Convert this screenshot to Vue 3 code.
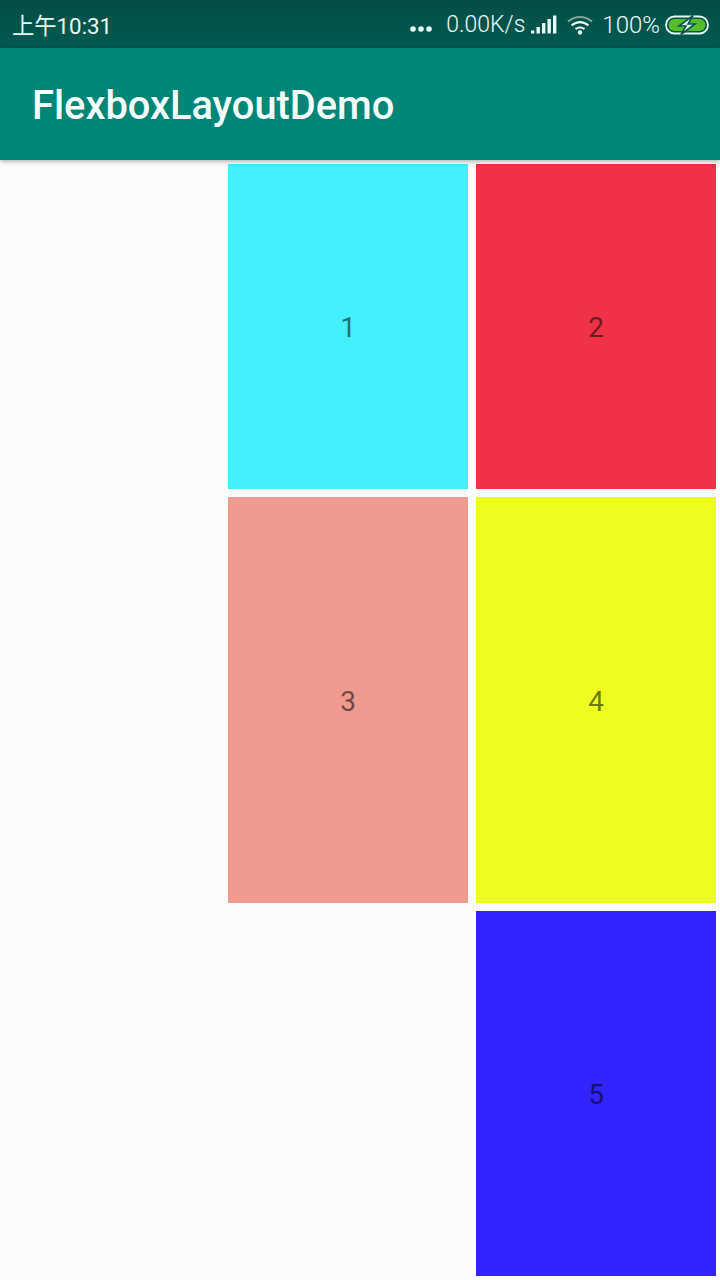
<script setup>
const items = [
  { label: '1', color: '#43eeff', height: 325 },
  { label: '2', color: '#ef3245', height: 325 },
  { label: '3', color: '#ef9a8f', height: 406 },
  { label: '4', color: '#eeff1f', height: 406 },
  { label: '5', color: '#3222ff', height: 365 },
]
</script>

<template>
  <div class="page">
    <div class="status-bar">
      <span class="time">上午10:31</span>
      <div class="status-right">
        <svg class="dots" width="22" height="6" viewBox="0 0 22 6">
          <circle cx="3" cy="3" r="2.8" />
          <circle cx="11" cy="3" r="2.8" />
          <circle cx="19" cy="3" r="2.8" />
        </svg>
        <span class="speed">0.00K/s</span>
        <svg class="signal" width="26" height="20" viewBox="0 0 26 20">
          <rect x="0" y="15.5" width="3.4" height="3" />
          <rect x="5.5" y="12" width="3.4" height="6.5" />
          <rect x="11" y="8" width="3.4" height="10.5" />
          <rect x="16.5" y="4" width="3.4" height="14.5" />
          <rect x="22" y="0.5" width="3.4" height="18" />
        </svg>
        <svg class="wifi" width="26" height="20" viewBox="0 0 26 20" fill="none">
          <path d="M1 6.5C8 0.5 18 0.5 25 6.5" stroke="#7fa79e" stroke-width="2.2" />
          <path d="M4.5 10.5C10 6 16 6 21.5 10.5" stroke="#e6fbf6" stroke-width="2.2" />
          <path d="M8.5 14C11.5 12 14.5 12 17.5 14" stroke="#e6fbf6" stroke-width="2.2" />
          <circle cx="13" cy="17.5" r="2.2" fill="#e6fbf6" />
        </svg>
        <span class="percent">100%</span>
        <svg class="battery" width="44" height="20" viewBox="0 0 44 20" fill="none">
          <rect x="1" y="1.5" width="42" height="17" rx="8.5" stroke="#e6fbf6" stroke-width="1.8" />
          <rect x="3.5" y="4" width="37" height="12" rx="6" fill="#55bd2c" />
          <path d="M28 0.5L14 11h7l-5 8.5L30 9h-7z" fill="#e6fbf6" stroke="#00574d" stroke-width="1.6" />
        </svg>
      </div>
    </div>
    <div class="toolbar">
      <span class="title">FlexboxLayoutDemo</span>
    </div>
    <div class="flex-box">
      <div
        v-for="item in items"
        :key="item.label"
        class="flex-item"
        :style="{ background: item.color, height: item.height + 'px' }"
      >
        {{ item.label }}
      </div>
    </div>
  </div>
</template>

<style scoped>
.page {
  width: 720px;
  height: 1280px;
  background: #fbfbfb;
  overflow: hidden;
  font-family: Roboto, "Noto Sans CJK SC", sans-serif;
}

.status-bar {
  height: 48px;
  display: flex;
  align-items: center;
  justify-content: space-between;
  padding: 0 11px 0 12px;
  box-sizing: border-box;
  background: linear-gradient(#034d45, #005b50);
  color: #e6fbf6;
  font-size: 23px;
}

.time {
  font-size: 22.3px;
  font-weight: 400;
}

.status-right {
  display: flex;
  align-items: center;
  padding-top: 1px;
}

.dots {
  fill: #e6fbf6;
  margin-top: 9px;
  margin-right: 14px;
}

.speed {
  margin-right: 6px;
  font-weight: 300;
}

.signal {
  fill: #e6fbf6;
  margin-right: 10px;
}

.wifi {
  margin-right: 9px;
}

.percent {
  font-size: 24px;
  font-weight: 300;
  margin-right: 5px;
}

.toolbar {
  position: relative;
  height: 112px;
  display: flex;
  align-items: center;
  padding: 3px 0 0 32px;
  box-sizing: border-box;
  background: #008577;
  box-shadow: 0 1px 5px rgba(0, 0, 0, 0.35);
}

.title {
  color: #f4fffc;
  font-size: 39.8px;
  font-weight: 500;
}

.flex-box {
  display: flex;
  flex-wrap: wrap;
  justify-content: flex-end;
}

.flex-item {
  width: 240px;
  margin: 4px;
  padding-top: 2px;
  box-sizing: border-box;
  display: flex;
  align-items: center;
  justify-content: center;
  font-size: 28px;
  color: rgba(0, 0, 0, 0.54);
}
</style>
